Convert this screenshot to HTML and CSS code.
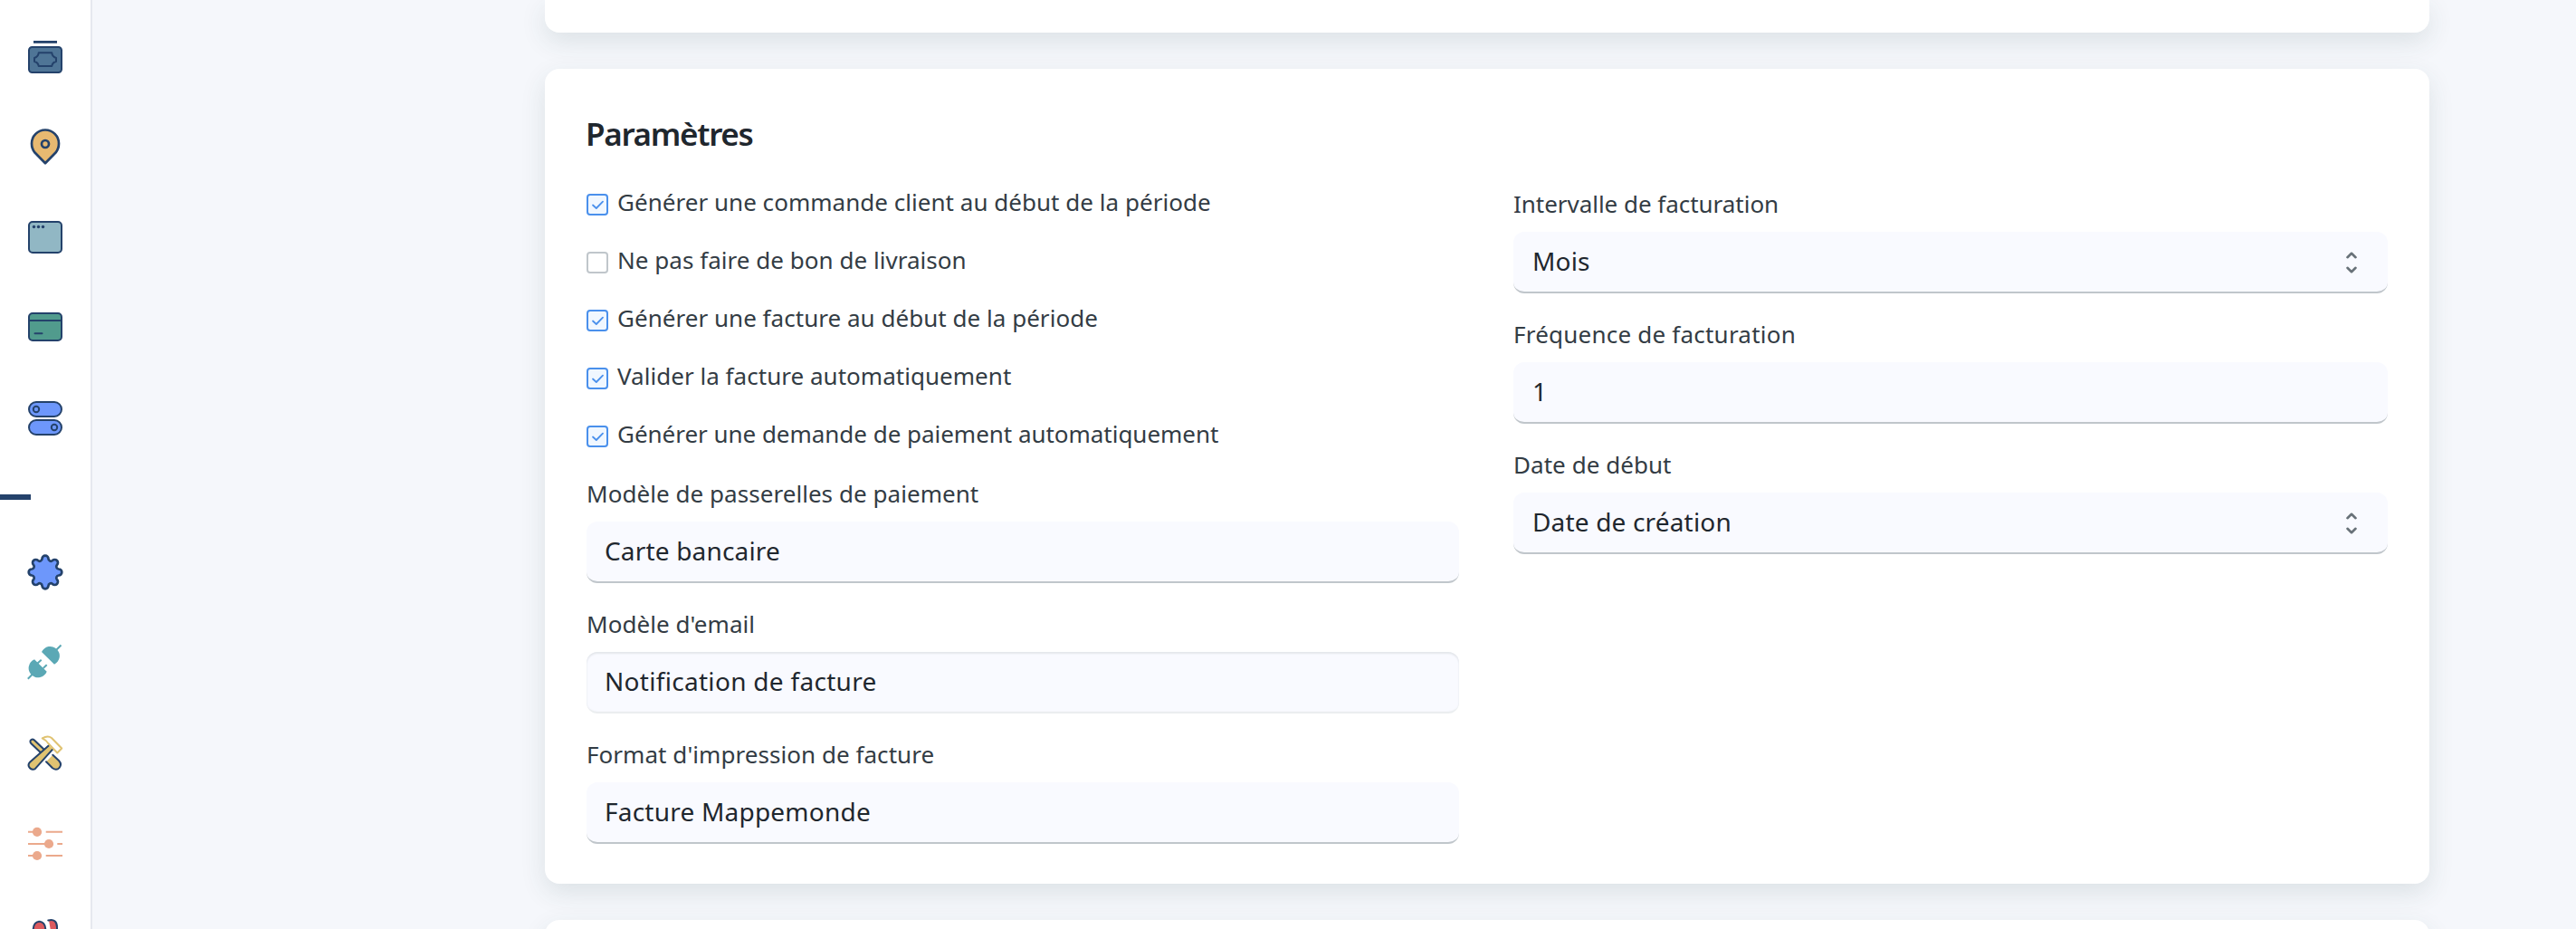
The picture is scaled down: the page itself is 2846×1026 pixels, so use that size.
FILE: index.html
```html
<!DOCTYPE html>
<html lang="fr">
<head>
<meta charset="utf-8">
<title>Paramètres</title>
<link rel="stylesheet" href="styles.css">
</head>
<body>
<div class="app">
  <nav class="sidebar">
    <a class="nav-item"><svg viewBox="-22 -22 44 44"><path class="ink" d="M-13-17H13V-14.2H-13Z"/><rect class="line" x="-18" y="-10" width="36" height="28" rx="3.5" fill="#4f7596"/><path class="line" d="M-7.3-3.7H7.3C7.6-1 9 1 12 2V6C9 6.800 7.600 8.500 7.300 11H-7.300C-7.600 8.500-9 6.800-12 6V2C-9 1-7.600-1-7.300-3.700Z" fill="none"/></svg></a>
    <a class="nav-item"><svg viewBox="-22 -22 44 44"><path class="line thick" d="M0 18.200L-11.500 6.500C-14.500 3-15 0-15-3.500A15 15 0 0 1 15-3.500C15 0 14.500 3 11.500 6.500Z" fill="#e7b971"/><circle class="line thick" cx="0" cy="-3" r="4" fill="#e7b971"/></svg></a>
    <a class="nav-item"><svg viewBox="-22 -22 44 44"><rect class="line" x="-18" y="-17" width="36" height="34" rx="4" fill="#91b7c4"/><g class="ink"><circle cx="-12.500" cy="-11.500" r="1.700"/><circle cx="-7.500" cy="-11.500" r="1.700"/><circle cx="-2.500" cy="-11.500" r="1.700"/></g></svg></a>
    <a class="nav-item"><svg viewBox="-22 -22 44 44"><rect class="line" x="-18" y="-16" width="36" height="30" rx="4" fill="#519b8d"/><path class="line" d="M-18-8H18M-11.500 6.200H-3.500" fill="none"/></svg></a>
    <a class="nav-item"><svg viewBox="-22 -22 44 44"><g class="line" fill="#6d97fb"><rect x="-18" y="-18" width="36" height="16" rx="8"/><rect x="-18" y="2" width="36" height="16" rx="8"/><circle cx="-10" cy="-10" r="3.200"/><circle cx="10" cy="10" r="3.200"/></g></svg></a>
    <div class="divider"></div>
    <a class="nav-item"><svg viewBox="-22 -22 44 44"><path class="line thick" d="M14.800-3.500A3.500 3.500 0 0 1 14.800 3.500A2.700 2.700 0 0 0 12.940 7.990A3.500 3.500 0 0 1 7.990 12.940A2.700 2.700 0 0 0 3.500 14.800A3.500 3.500 0 0 1-3.500 14.800A2.700 2.700 0 0 0-7.990 12.940A3.500 3.500 0 0 1-12.940 7.990A2.700 2.700 0 0 0-14.800 3.500A3.500 3.500 0 0 1-14.800-3.500A2.700 2.700 0 0 0-12.940-7.990A3.500 3.500 0 0 1-7.990-12.940A2.700 2.700 0 0 0-3.500-14.800A3.500 3.500 0 0 1 3.500-14.800A2.700 2.700 0 0 0 7.990-12.940A3.500 3.500 0 0 1 12.940-7.990A2.700 2.700 0 0 0 14.800-3.500Z" fill="#6d97fb"/></svg></a>
    <a class="nav-item"><svg viewBox="-22 -22 44 44"><g fill="#5ba8b5"><path d="M-4-12A10.400 10.400 0 1 1 10 1.700Z"/><path d="M-12-3.700A10.400 10.400 0 1 0 1.700 9.700Z"/></g><path d="M12.500-14.500L17.500-19.500M-19.200 17.700L-14 12.500M-8.500.500L-4.300-3.300M-2.300 6L1.700 2.300" stroke="#5ba8b5" stroke-width="2"/></svg></a>
    <a class="nav-item"><svg viewBox="-22 -22 44 44"><path class="line" d="M-5-.7L-15.500-10.700C-18.500-14-14.500-17-12-14.500L-1.300-4.200" fill="#e0c372"/><path d="M8.300 1.700L1 9.300L9 17C15 19.500 18.500 14.500 16.500 10Z" fill="#e0c372"/><path class="line" d="M8.300 1.700L15 8C20 13.500 14 20.500 8 16.300L1 9.300" fill="none"/><path class="line" d="M4-8.700L-17 9.700C-21 14-15 20.500-10.800 16.700L8.300-4.700" fill="#e0c372"/><path d="M-3.300-16.600C1-19.200 4.500-19 7-17L18.200-5.500L13.300-.5L3.300-11C2-13 0-15-3.300-16.600Z" fill="none" stroke="#e0c372" stroke-width="2" stroke-linejoin="round"/></svg></a>
    <a class="nav-item"><svg viewBox="-22 -22 44 44"><path d="M-19-13.200H-9M.700-13.200H19M-19 0H4M13.300 0H19M-19 13H-9M.700 13H19" stroke="#eba98c" stroke-width="2"/><g fill="#eba98c"><circle cx="-9" cy="-13.200" r="5.100"/><circle cx="4" cy="0" r="5.100"/><circle cx="-9" cy="13" r="5.100"/></g></svg></a>
    <a class="nav-item"><svg viewBox="-22 -22 44 44"><path class="line" d="M-13.300 12V-5C-13.300-17.500.300-17.500.300-5V12Z" fill="#dc5a5f"/><path d="M4-15.500C10-17 13-13.500 13-8V12H6V-4Z" fill="#dc5a5f"/><path class="line" d="M3.300-15.500C9.500-17.500 13-14 13-8V12" fill="none"/></svg></a>
  </nav>

  <main class="content">
    <section class="card card-previous"></section>
    <section class="card">
      <h2 class="card-title">Paramètres</h2>
      <div class="columns">
        <div class="column">
          <div class="checks">
            <label class="check"><span class="box checked"><svg viewBox="0 0 20 20"><path d="M5 10.500L8.800 14L16 6.700"/></svg></span><span class="check-label">Générer une commande client au début de la période</span></label>
            <label class="check"><span class="box"></span><span class="check-label">Ne pas faire de bon de livraison</span></label>
            <label class="check"><span class="box checked"><svg viewBox="0 0 20 20"><path d="M5 10.500L8.800 14L16 6.700"/></svg></span><span class="check-label">Générer une facture au début de la période</span></label>
            <label class="check"><span class="box checked"><svg viewBox="0 0 20 20"><path d="M5 10.500L8.800 14L16 6.700"/></svg></span><span class="check-label">Valider la facture automatiquement</span></label>
            <label class="check"><span class="box checked"><svg viewBox="0 0 20 20"><path d="M5 10.500L8.800 14L16 6.700"/></svg></span><span class="check-label tight">Générer une demande de paiement automatiquement</span></label>
          </div>
          <div class="fields">
            <div class="field"><div class="field-label">Modèle de passerelles de paiement</div><div class="control">Carte bancaire</div></div>
            <div class="field"><div class="field-label">Modèle d'email</div><div class="control control-inset">Notification de facture</div></div>
            <div class="field"><div class="field-label">Format d'impression de facture</div><div class="control wide">Facture Mappemonde</div></div>
          </div>
        </div>
        <div class="column column-right">
          <div class="fields">
            <div class="field"><div class="field-label tight">Intervalle de facturation</div><div class="control select">Mois<svg class="chevrons" viewBox="0 0 12 24"><path d="M1.500 6.200L6 1.800L10.500 6.200M1.500 17.800L6 22.200L10.500 17.800"/></svg></div></div>
            <div class="field"><div class="field-label wide">Fréquence de facturation</div><div class="control">1</div></div>
            <div class="field"><div class="field-label">Date de début</div><div class="control select">Date de création<svg class="chevrons" viewBox="0 0 12 24"><path d="M1.500 6.200L6 1.800L10.500 6.200M1.500 17.800L6 22.200L10.500 17.800"/></svg></div></div>
          </div>
        </div>
      </div>
    </section>
    <section class="card card-next"></section>
  </main>
</div>
</body>
</html>
```
FILE: styles.css
```css
* { box-sizing: border-box; }

body {
  margin: 0;
  background: #f5f7fb;
  font-family: "Noto Sans", sans-serif;
  color: #1f272e;
}

.app {
  display: flex;
  height: 1026px;
  overflow: hidden;
}

/* Sidebar */
.sidebar {
  flex: none;
  width: 102px;
  padding-top: 12px;
  background: #fff;
  border-right: 2px solid #e6e8ef;
}

.nav-item {
  display: flex;
  align-items: center;
  justify-content: center;
  height: 100px;
}

.nav-item svg { width: 44px; height: 44px; }

.line {
  stroke: #24426b;
  stroke-width: 2;
  stroke-linecap: round;
  stroke-linejoin: round;
}

.thick { stroke-width: 2.7; }
.ink { fill: #24426b; }

.divider {
  width: 34px;
  height: 6px;
  margin: 34px 0 30px;
  background: #24426b;
}

/* Cards */
.content {
  display: flex;
  flex-direction: column;
  gap: 40px;
  width: 2082px;
  margin-left: 500px;
}

.card {
  flex: none;
  height: 900px;
  padding: 50px 46px 44px;
  background: #fff;
  border-radius: 16px;
  box-shadow: 0 10px 28px rgba(40, 72, 72, .12);
}

.card-previous {
  height: 36px;
  padding: 0;
  border-radius: 0 0 16px 16px;
}

.card-next { height: 200px; }

.card-title {
  margin: 0 0 24px -1px;
  font-size: 35px;
  font-weight: 600;
  line-height: 44px;
  letter-spacing: -1.3px;
}

.columns {
  display: grid;
  grid-template-columns: 964px 966px;
  gap: 60px;
}

/* Checkboxes */
.checks { margin-bottom: 13px; }

.check {
  display: flex;
  align-items: center;
  gap: 10px;
  height: 64px;
}

.check-label {
  padding-bottom: 6px;
  color: #333c44;
  font-size: 26px;
  line-height: 36px;
  letter-spacing: .03px;
}

.box {
  width: 24px;
  height: 24px;
  background: #fff;
  border: 2px solid #c0c6cb;
  border-radius: 4px;
}

.checked {
  background: #f0f7ff;
  border-color: #4a90ec;
}

.box svg {
  display: block;
  width: 20px;
  height: 20px;
  fill: none;
  stroke: #4a90ec;
  stroke-width: 1.8;
  stroke-linecap: round;
  stroke-linejoin: round;
}

/* Fields */
.column-right { padding-top: 13px; }

.fields {
  display: flex;
  flex-direction: column;
  gap: 27px;
}

.field-label {
  margin-bottom: 13px;
  color: #333c44;
  font-size: 26px;
  line-height: 36px;
  letter-spacing: .05px;
}

.control {
  display: flex;
  align-items: center;
  height: 68px;
  padding: 0 20px 2px;
  background: #f9faff;
  border-bottom: 2px solid #c0c6cb;
  border-radius: 12px;
  font-size: 28px;
  letter-spacing: .17px;
}

.column-right .control { padding-left: 21px; }

.wide { letter-spacing: .22px; }

.tight { letter-spacing: -.03px; }

.control-inset {
  border-bottom-color: #ebeef0;
  box-shadow: inset 0 2px 2px #e4e7eb, inset 0 0 2px #eef0f4;
  letter-spacing: .3px;
}

.select {
  justify-content: space-between;
  padding-right: 34px;
}

.chevrons {
  width: 12px;
  height: 24px;
  margin-top: 3px;
  fill: none;
  stroke: #687178;
  stroke-width: 2.6;
  stroke-linecap: round;
  stroke-linejoin: round;
}
```
